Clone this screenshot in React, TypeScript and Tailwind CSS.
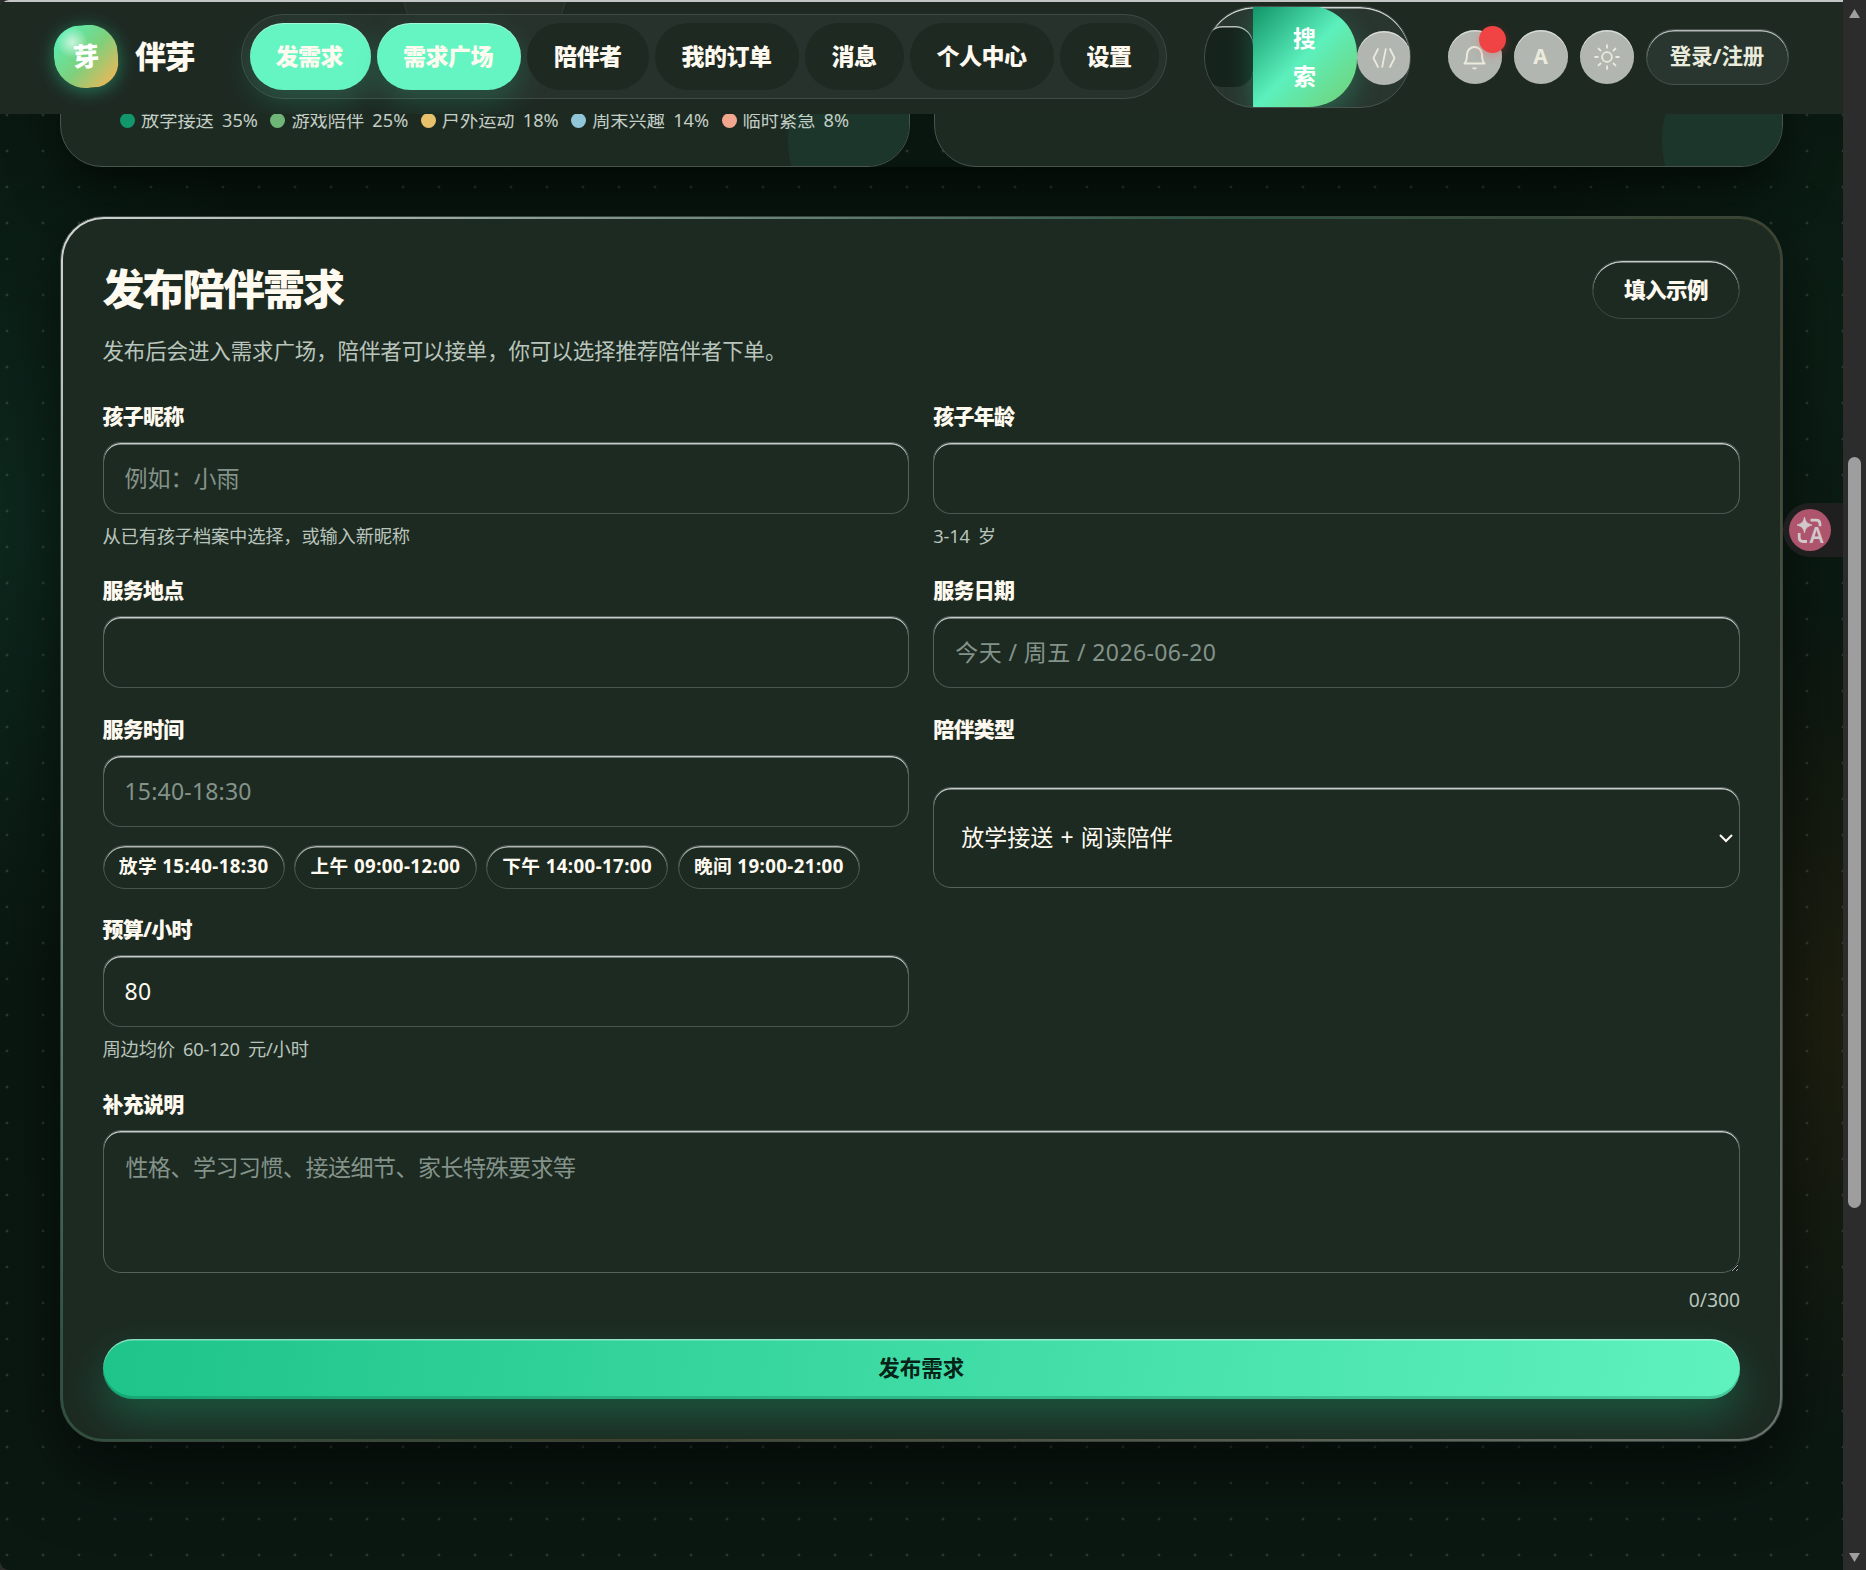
import type { ReactNode } from "react";

const NAV = ["发需求", "需求广场", "陪伴者", "我的订单", "消息", "个人中心", "设置"];
const LEGEND = [
  { label: "放学接送 35%", color: "bg-[#12966b]" },
  { label: "游戏陪伴 25%", color: "bg-[#6fb578]" },
  { label: "户外运动 18%", color: "bg-[#e8c16c]" },
  { label: "周末兴趣 14%", color: "bg-[#90c6d8]" },
  { label: "临时紧急 8%", color: "bg-[#f0a78e]" },
];
const CHIPS = ["放学 15:40-18:30", "上午 09:00-12:00", "下午 14:00-17:00", "晚间 19:00-21:00"];

const FIELD =
  "block h-[72px] w-full rounded-[18px] border border-[#55625b] border-b-[#4a5750] bg-[#1d2a22] px-[21px] text-[23px] text-[#fffaf0] placeholder-[#84938a] outline-none shadow-[inset_0_1.5px_0_rgba(255,255,255,0.75)]";

function Label({ children }: { children: ReactNode }) {
  return (
    <div className="mb-[11px] h-[30px] text-[21px] leading-[30px] font-extrabold tracking-[-0.75px] text-[#fffaf0]">
      {children}
    </div>
  );
}

function Hint({ children }: { children: ReactNode }) {
  return (
    <div className="mt-[8px] h-[27px] text-[18.3px] leading-[27px] tracking-[-0.2px] text-[#b9c5bc] [word-spacing:3.5px]">
      {children}
    </div>
  );
}

function RoundButton({ children }: { children: ReactNode }) {
  return (
    <button className="relative flex size-[54px] shrink-0 items-center justify-center rounded-full bg-[#b2b6b0] text-[#ebebdd] shadow-[inset_0_1.5px_0_rgba(255,255,255,0.5)]">
      {children}
    </button>
  );
}

function Header() {
  return (
    <header className="relative z-10 flex h-[114px] items-center overflow-hidden border-t-2 border-[#c4c6c5] bg-[#1e2922] pb-[3px]">
      <div className="absolute top-[-98px] left-[402px] size-[165px] rounded-full border border-white/5 bg-white/[0.03]" />
      <div className="ml-[54px] flex h-[63px] w-[64px] shrink-0 rotate-[-4deg] items-center justify-center rounded-[42%_46%_40%_50%] bg-[radial-gradient(circle_at_30%_26%,rgba(255,255,255,0.65),rgba(255,255,255,0)_24%),linear-gradient(135deg,#55f0b4_8%,#7fd07c_52%,#f5b455_95%)] text-[26px] font-extrabold text-white shadow-[0_3px_18px_rgba(46,214,155,0.45)]">
        芽
      </div>
      <div className="ml-[17px] w-[106px] shrink-0 text-[31px] font-extrabold tracking-[-1.5px] text-[#fffaf0]">伴芽</div>
      <nav className="relative flex h-[85px] shrink-0 items-center gap-[6px] rounded-full border border-[#3e4a43] bg-[#27322c] px-[7.5px]">
        {NAV.map((n, i) => (
          <a
            key={n}
            className={
              i < 2
                ? "flex h-[67px] items-center rounded-full bg-[#65f5c2] pr-[28px] pl-[26px] text-[23px] font-extrabold tracking-[-0.5px] text-[#fffaf0] shadow-[inset_0_1px_0_rgba(255,255,255,0.4),0_12px_30px_rgba(46,214,155,0.22)]"
                : "flex h-[67px] items-center rounded-full bg-[#1e2922] px-[27px] text-[23px] font-extrabold tracking-[-0.5px] text-[#fffaf0]"
            }
          >
            {n}
          </a>
        ))}
      </nav>
      <div className="ml-[36.500px] flex h-[102px] w-[207px] shrink-0 items-center overflow-hidden rounded-[51px] border border-[#46534c] bg-[#29352f] shadow-[inset_0_1.5px_0_rgba(255,255,255,0.8)]">
        <div className="h-[61px] w-[48px] shrink-0 rounded-[18px] bg-[#16231d] shadow-[inset_0_1.5px_0_rgba(255,255,255,0.7)]" />
        <button className="flex h-[101px] w-[104px] shrink-0 flex-col items-center justify-center rounded-r-[48px] bg-[linear-gradient(135deg,#119468,#5cf0bd_50%,#74cf72)] text-[23px] leading-[38px] font-bold text-white shadow-[0_10px_28px_rgba(46,214,155,0.3)]">
          <span>搜</span>
          <span>索</span>
        </button>
        <div className="mt-[3px]">
          <RoundButton>
            <svg width="24" height="24" viewBox="0 0 24 24" fill="none" stroke="currentColor" strokeWidth="1.7" strokeLinecap="round" strokeLinejoin="round">
              <path d="M6 3 1.5 12 6 21M18 3l4.500 9L18 21M13.800 3l-3.600 18" />
            </svg>
          </RoundButton>
        </div>
      </div>
      <div className="ml-[37px] flex shrink-0 items-center gap-[12px]">
        <RoundButton>
          <svg width="27" height="28" viewBox="0 0 27 28" fill="none" stroke="currentColor" strokeWidth="2" strokeLinejoin="round">
            <path d="M3.500 20.500c2-2 2.500-4 2.500-9a7.500 7.500 0 0 1 15 0c0 5 .5 7 2.500 9z" />
            <path d="M11 24.500a2.600 2.600 0 0 0 5 0z" fill="currentColor" stroke="none" />
          </svg>
          <span className="absolute top-[-4px] right-[-4px] size-[27px] rounded-full bg-[#f04444] shadow-[0_3px_8px_rgba(240,68,68,0.3)]" />
        </RoundButton>
        <RoundButton>
          <span className="text-[21px] font-bold">A</span>
        </RoundButton>
        <RoundButton>
          <svg width="26" height="26" viewBox="0 0 24 24" fill="none" stroke="currentColor" strokeWidth="1.700" strokeLinecap="round">
            <circle cx="12" cy="12" r="4.500" />
            <path d="M12 1v2.500M12 20.500V23M1 12h2.500M20.500 12H23M4.200 4.200 6 6M18 18l1.800 1.800M4.200 19.800 6 18M18 6l1.800-1.800" />
          </svg>
        </RoundButton>
        <button className="flex h-[56px] w-[143px] shrink-0 items-center justify-center rounded-full border border-[#46534c] bg-[#29352f] text-[21.500px] font-bold tracking-[-0.100px] text-[#e9ecdd] shadow-[inset_0_1.5px_0_rgba(255,255,255,0.65)]">
          登录/注册
        </button>
      </div>
    </header>
  );
}

function StatCard({ children }: { children?: ReactNode }) {
  return (
    <div className="relative h-[94px] flex-1 overflow-hidden rounded-b-[42px] border border-[#48554d] bg-[#1d2a22]">
      <div className="absolute top-[-39px] left-[727px] size-[210px] rounded-full bg-[#1d362b]" />
      {children}
    </div>
  );
}

function RequestForm() {
  return (
    <section className="mx-[60px] mt-[49px] h-[1226px] rounded-[44px] border border-[#3a453e] bg-[linear-gradient(135deg,rgba(255,255,255,0.8),rgba(94,240,190,0.22)_38%,rgba(250,200,100,0.15)_60%,rgba(255,255,255,0.35)),linear-gradient(#1d2a22,#1d2a22)] p-[2px] shadow-[0_30px_70px_rgba(0,0,0,0.55)]">
      <div className="h-full overflow-hidden rounded-[41px] bg-[#1d2a22] pr-[40px] pl-[39.500px]">
        <div className="flex h-[181.500px] items-start justify-between">
          <div>
            <h1 className="mt-[40px] h-[60px] text-[42px] leading-[60px] font-black tracking-[-1.900px] text-[#fffaf0]">发布陪伴需求</h1>
            <p className="mt-[16px] text-[21.500px] leading-[32px] tracking-[-0.130px] text-[#b9c5bc]">
              发布后会进入需求广场，陪伴者可以接单，你可以选择推荐陪伴者下单。
            </p>
          </div>
          <button className="mt-[41px] flex h-[59px] w-[148px] items-center justify-center rounded-full border border-[#3e4b44] pt-[1px] text-[21.500px] font-extrabold tracking-[-0.500px] text-[#fffaf0] shadow-[inset_0_1.5px_0_rgba(255,255,255,0.75)]">
            填入示例
          </button>
        </div>
        <div className="grid grid-cols-2 grid-rows-[174.5px_139px_199.5px_175px] gap-x-[24px]">
          <div>
            <Label>孩子昵称</Label>
            <input className={FIELD} placeholder="例如：小雨" />
            <Hint>从已有孩子档案中选择，或输入新昵称</Hint>
          </div>
          <div>
            <Label>孩子年龄</Label>
            <input className={FIELD} />
            <Hint>3-14 岁</Hint>
          </div>
          <div>
            <Label>服务地点</Label>
            <input className={FIELD} />
          </div>
          <div>
            <Label>服务日期</Label>
            <input className={`${FIELD} tracking-[0.4px]`} placeholder="今天 / 周五 / 2026-06-20" />
          </div>
          <div>
            <Label>服务时间</Label>
            <input className={`${FIELD} tracking-[0.2px]`} placeholder="15:40-18:30" />
            <div className="mt-[17.500px] flex gap-[9.200px]">
              {CHIPS.map((c) => (
                <button
                  key={c}
                  className="h-[44px] w-[182.500px] rounded-full border border-[#48554d] text-[18.700px] font-bold tracking-[0.400px] whitespace-nowrap text-[#fffaf0] shadow-[inset_0_1.5px_0_rgba(255,255,255,0.65)]"
                >
                  {c}
                </button>
              ))}
            </div>
          </div>
          <div>
            <Label>陪伴类型</Label>
            <div className="mt-[43px] flex h-[101px] items-center justify-between rounded-[18px] border border-[#55625b] pr-[5px] pl-[27px] text-[23px] text-[#fffaf0] shadow-[inset_0_1.5px_0_rgba(255,255,255,0.75)] [word-spacing:1.2px]">
              <span>放学接送 + 阅读陪伴</span>
              <svg width="16" height="16" viewBox="0 0 16 16" fill="none" stroke="currentColor" strokeWidth="2">
                <path d="m2 5 6 6 6-6" />
              </svg>
            </div>
          </div>
          <div>
            <Label>预算/小时</Label>
            <input className={`${FIELD} tracking-[0.4px]`} defaultValue="80" />
            <Hint>周边均价 60-120 元/小时</Hint>
          </div>
        </div>
        <Label>补充说明</Label>
        <textarea
          className="block h-[143px] w-full rounded-[18px] border border-[#55625b] bg-[#1d2a22] px-[22px] py-[19px] text-[23px] leading-[35px] tracking-[-0.500px] text-[#fffaf0] placeholder-[#84938a] outline-none shadow-[inset_0_1.5px_0_rgba(255,255,255,0.75)]"
          placeholder="性格、学习习惯、接送细节、家长特殊要求等"
        />
        <div className="mt-[13px] h-[28px] text-right text-[19.300px] leading-[28px] text-[#b9c5bc]">0/300</div>
        <button className="mt-[25px] flex h-[60px] w-full items-center justify-center rounded-full bg-[linear-gradient(100deg,#1ec48a,#5ff2be)] text-[21.500px] font-bold text-[#062318] shadow-[inset_0_1.5px_0_rgba(255,255,255,0.45),inset_0_-3px_0_rgba(0,80,50,0.25),0_18px_42px_rgba(26,180,125,0.32)]">
          发布需求
        </button>
      </div>
    </section>
  );
}

export default function App() {
  return (
    <div className="flex h-[1570px] w-[1866px] overflow-hidden bg-[#2c2c2d] font-['Noto_Sans','Noto_Sans_CJK_SC',sans-serif]">
      <main className="relative w-[1843px] overflow-hidden rounded-l-[9px] bg-[radial-gradient(circle_at_7px_7px,rgba(255,255,255,0.13)_1px,transparent_1.8px),radial-gradient(ellipse_340px_460px_at_0px_520px,rgba(16,58,44,0.5),transparent),radial-gradient(ellipse_300px_420px_at_1843px_1020px,rgba(50,38,14,0.5),transparent),radial-gradient(ellipse_300px_400px_at_1843px_330px,rgba(14,44,28,0.4),transparent),linear-gradient(#09160f,#0b1812)] bg-[size:36px_36px,auto,auto,auto,auto]">
        <Header />
        <div className="mx-[60px] -mt-[41px] flex gap-[24px] rounded-b-[42px] shadow-[0_20px_50px_rgba(0,0,0,0.55)]">
          <StatCard>
            <div className="mt-[33px] ml-[59px] flex h-[27px]">
              {LEGEND.map((l) => (
                <div
                  key={l.label}
                  className="relative flex w-[150.400px] items-center gap-[6px] text-[18.200px] whitespace-nowrap text-[#c3cec5] [word-spacing:3.5px]"
                >
                  <span className={`size-[15px] shrink-0 rounded-full ${l.color}`} />
                  {l.label}
                </div>
              ))}
            </div>
          </StatCard>
          <StatCard />
        </div>
        <RequestForm />
        <div className="absolute top-[503px] right-0 flex h-[54px] w-[60px] items-center rounded-l-full bg-[#1f1f20] pl-[6px]">
          <svg width="42" height="42" viewBox="0 0 42 42" fill="none">
            <circle cx="21" cy="21" r="21" fill="#ae546c" />
            <path d="M15.500 8c1 5 2.500 6.500 7.500 8-5 1.500-6.500 3-7.500 8-1-5-2.500-6.500-7.500-8 5-1.500 6.500-3 7.500-8z" fill="#d0c8ca" stroke="#d0c8ca" strokeWidth="0.800" />
            <path d="M21.500 11.200h5.500c3 0 4 1.500 4 4v2M10.200 24v4c0 3 1.500 4.500 4 4.500h3.800" stroke="#d0c8ca" strokeWidth="2.800" />
            <text x="27.500" y="34" textAnchor="middle" fontSize="21" fontWeight="600" fill="#d0c8ca">A</text>
          </svg>
        </div>
      </main>
      <aside className="flex w-[23px] flex-col items-center pt-[9px]">
        <div className="h-[9px] w-[11px] bg-[#9e9e9e] [clip-path:polygon(50%_0,100%_100%,0_100%)]" />
        <div className="mt-[439px] h-[751px] w-[13px] rounded-full bg-[#9e9e9e]" />
        <div className="mt-[345px] h-[9px] w-[11px] bg-[#9e9e9e] [clip-path:polygon(0_0,100%_0,50%_100%)]" />
      </aside>
    </div>
  );
}
